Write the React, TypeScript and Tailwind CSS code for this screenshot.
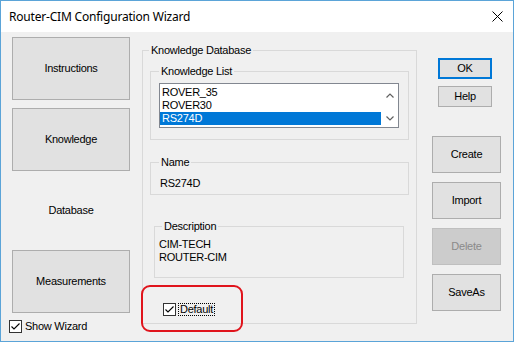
import React from 'react';

const btn = 'border border-[#adadad] bg-[#e1e1e1] flex items-center justify-center';

function Group({
  label,
  className,
  legendClass,
  children,
}: {
  label: string;
  className: string;
  legendClass: string;
  children?: React.ReactNode;
}) {
  return (
    <div className={`border border-[#d9d9d9] ${className}`}>
      <div className={`-mt-[8px] w-fit px-[2px] bg-[#f0f0f0] leading-[14px] ${legendClass}`}>{label}</div>
      {children}
    </div>
  );
}

function CheckBox() {
  return (
    <div className="w-[13px] h-[13px] border border-[#333333] bg-white shrink-0">
      <svg width="11" height="11" viewBox="0 0 11 11">
        <path d="M1.5 5.5 L4 8 L9.5 2.5" fill="none" stroke="#000" strokeWidth="1.1" />
      </svg>
    </div>
  );
}

export default function App() {
  return (
    <div className="relative w-[514px] h-[342px] border border-[#5ba4d8] bg-[#f0f0f0] flex flex-col overflow-hidden font-['Liberation_Sans',Arial,sans-serif] text-[11px] tracking-[-0.25px] text-black">
      {/* Title bar */}
      <div className="h-[31px] shrink-0 bg-white flex items-center justify-between pl-[8px] pr-[10px]">
        <span className="font-['Noto_Sans',sans-serif] text-[12px] tracking-[-0.2px]">Router-CIM Configuration Wizard</span>
        <svg width="11" height="11" viewBox="0 0 11 11">
          <path d="M0.5 0.5 L10.5 10.5 M10.5 0.5 L0.5 10.5" stroke="#000" strokeWidth="1" />
        </svg>
      </div>

      <div className="flex flex-1">
        {/* Left navigation */}
        <div className="flex flex-col pl-[11px] pt-[5px]">
          <div className="flex flex-col gap-[8px] w-[118px]">
            <div className={`${btn} h-[63px]`}>Instructions</div>
            <div className={`${btn} h-[63px]`}>Knowledge</div>
            <div className="h-[63px] flex items-center justify-center">Database</div>
            <div className={`${btn} h-[63px]`}>Measurements</div>
          </div>
          <div className="mt-[7px] -ml-[3px] flex items-center gap-[3px] leading-[13px]">
            <CheckBox />
            <span>Show Wizard</span>
          </div>
        </div>

        {/* Knowledge Database group */}
        <Group label="Knowledge Database" className="mt-[18px] ml-[12px] w-[275px] h-[274px]" legendClass="ml-[6px]">
          <Group label="Knowledge List" className="mt-[14px] ml-[7px] w-[259px] h-[69px]" legendClass="ml-[8px]">
            <div className="mt-[5px] ml-[8px] w-[240px] h-[45px] border border-[#828790] bg-white flex">
              <div className="flex-1 pt-[2px]">
                <div className="h-[13px] leading-[13px] pl-[2px]">ROVER_35</div>
                <div className="h-[13px] leading-[13px] pl-[2px]">ROVER30</div>
                <div className="h-[13px] leading-[13px] pl-[2px] bg-[#0078d7] text-white">RS274D</div>
              </div>
              <div className="w-[17px] flex flex-col items-center justify-between pt-[9px] pb-[6px]">
                <svg width="8" height="5" viewBox="0 0 8 5">
                  <path d="M0.5 4.5 L4 1 L7.5 4.5" fill="none" stroke="#606060" strokeWidth="1.2" />
                </svg>
                <svg width="8" height="5" viewBox="0 0 8 5">
                  <path d="M0.5 0.5 L4 4 L7.5 0.5" fill="none" stroke="#606060" strokeWidth="1.2" />
                </svg>
              </div>
            </div>
          </Group>

          <Group label="Name" className="mt-[22px] ml-[7px] w-[259px] h-[33px]" legendClass="ml-[8px]">
            <div className="mt-[8px] ml-[9px] leading-[13px]">RS274D</div>
          </Group>

          <Group label="Description" className="mt-[31px] ml-[11px] w-[250px] h-[52px]" legendClass="ml-[7px]">
            <div className="mt-[5px] ml-[4px] leading-[13px]">
              <div>CIM-TECH</div>
              <div>ROUTER-CIM</div>
            </div>
          </Group>

          <div className="mt-[25px] ml-[20px] flex items-center gap-[2px]">
            <CheckBox />
            <span className="border border-dotted border-black px-[1px] leading-[11px]">Default</span>
          </div>
        </Group>

        {/* Action buttons */}
        <div className="flex flex-col pt-[26px] ml-[15px] w-[69px]">
          <div className="ml-[6px] w-[54px] h-[21px] border-2 border-[#0078d7] bg-[#e1e1e1] flex items-center justify-center">OK</div>
          <div className={`${btn} mt-[7px] ml-[6px] w-[54px] h-[21px]`}>Help</div>
          <div className={`${btn} mt-[29px] h-[37px]`}>Create</div>
          <div className={`${btn} mt-[9px] h-[37px]`}>Import</div>
          <div className="mt-[9px] h-[37px] border border-[#bfbfbf] bg-[#cccccc] text-[#8a8a8a] flex items-center justify-center">Delete</div>
          <div className={`${btn} mt-[9px] h-[37px]`}>SaveAs</div>
        </div>
      </div>

      {/* red annotation around Default */}
      <div className="absolute left-[140px] top-[284px] w-[102px] h-[47px] border-[2.5px] border-[#e0141c] rounded-[9px]" />
    </div>
  );
}
